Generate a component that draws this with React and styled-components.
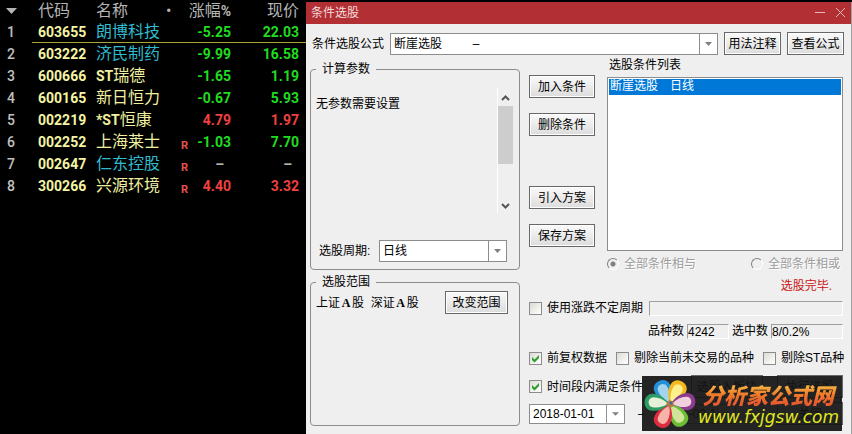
import React from 'react';
import styled, {createGlobalStyle, css} from 'styled-components';


const GlobalStyle = createGlobalStyle`
  * {
    box-sizing: border-box;
  }

  body {
    margin: 0;
    background: #000;
    color: #000;
    font: 12px/16px "Liberation Sans", "Noto Sans CJK SC", sans-serif;
  }

  button, input, select {
    font: inherit;
    color: inherit;
  }
`

const Screen = styled.div`
  display: grid;
  grid-template-columns: 306px minmax(0, 1fr);
  min-height: 100vh;
`

/* quotes */

const QuoteTable = styled.table`
  align-self: start;
  width: 100%;
  table-layout: fixed;
  border-collapse: separate;
  border-spacing: 0;
  font: 16px/20px Roboto, "Noto Sans CJK SC", sans-serif;

  th {
    height: 21px;
    padding: 0;
    font-weight: 400;
    text-align: left;
    color: #b4b4b4;
  }

  th:last-child, td:last-child {
    padding-right: 7px;
  }
`

const QuoteRow = styled.tr`
  td {
    height: 22px;
    padding: 0;
    border-bottom: 1px solid transparent;
  }

  td:not(:first-child) {
    border-color: ${({$active}) => $active ? '#a8a838' : 'transparent'};
  }
`

const tones = {
  up: '#f04040',
  down: '#20dc20',
  none: '#b4b4b4',
}

const IndexCell = styled.td`
  font-size: 14px;
  font-weight: 500;
  padding-left: 7px !important;
  color: #c0c0c0;
`

const CodeCell = styled.td`
  font-size: 14px;
  font-weight: 700;
  padding-left: 6px !important;
  color: #f4f4a4;
`

const NameCell = styled.td`
  white-space: nowrap;
  color: ${({$followed}) => $followed ? '#30bcd0' : '#f0f0a0'};

  b {
    font-size: 14px;
  }
`

const MarkCell = styled.td`
  font-size: 11px;
  line-height: 12px;
  font-weight: 700;
  text-align: right;
  vertical-align: bottom;
  color: #e85050;
`

const NumberCell = styled.td`
  font-size: 14px;
  font-weight: 700;
  text-align: right;
  color: ${({$tone}) => tones[$tone]};
`

const HeadCode = styled.th`
  padding-left: 6px !important;
`

const HeadNumber = styled.th`
  text-align: right !important;
  white-space: nowrap;

  b {
    font-size: 14px;
  }
`

const SortIcon = styled.svg`
  display: block;
  margin-left: 6px;
`

/* dialog */

const Dialog = styled.section`
  position: relative;
  display: flex;
  flex-direction: column;
  margin-top: 2px;
  background: #efefef;
  border-right: 1px solid #a0a0a0;
`

const TitleBar = styled.header`
  display: flex;
  align-items: center;
  justify-content: space-between;
  height: 22px;
  padding: 0 4px 0 5px;
  background: #b23034;
  color: #f4dcdc;

  h1 {
    margin: 0;
    font-size: 12px;
    font-weight: 400;
  }
`

const WindowButtons = styled.div`
  display: flex;
  gap: 6px;
`

const WindowButton = styled.button`
  width: 14px;
  height: 14px;
  padding: 0;
  border: 0;
  background: none;
  color: #e8b8b8;

  svg {
    display: block;
  }
`

const Body = styled.div`
  flex: 1;
  display: flex;
  flex-direction: column;
  gap: 2px;
  padding: 8px 7px 8px 4px;
`

const FormulaRow = styled.div`
  display: flex;
  align-items: center;
  gap: 6px;
  padding-left: 2px;
`

const PushButton = styled.button`
  height: 23px;
  width: ${({$width}) => $width || 66}px;
  padding: 0;
  border: 1px solid #686868;
  background: linear-gradient(#fafafa, #dcdcdc);
  box-shadow: inset 0 0 0 1px #fff;
  line-height: 16px;
  white-space: nowrap;
`

const SelectBox = styled.span`
  position: relative;
  display: block;
  ${({$width}) => $width ? css`width: ${$width}px;` : css`flex: 1;`}

  select {
    display: block;
    appearance: none;
    width: 100%;
    height: ${({$height}) => $height || 22}px;
    padding: 0 20px 0 3px;
    border: 1px solid #8c8c8c;
    border-radius: 0;
    background: #fff;
  }

  svg {
    position: absolute;
    top: 0;
    right: 0;
    height: 100%;
    pointer-events: none;
  }
`

const Columns = styled.div`
  flex: 1;
  display: grid;
  grid-template-columns: 210px minmax(0, 1fr);
  gap: 9px;
  padding-right: 1px;
`

const LeftColumn = styled.div`
  display: flex;
  flex-direction: column;
  gap: 4px;
  padding-top: 4px;
`

const Group = styled.fieldset`
  min-width: 0;
  margin: 0;
  padding: 0 5px 7px;
  border: 1px solid #8c8c8c;
  border-radius: 4px;
  ${({$fill}) => $fill && 'flex: 1;'}

  legend {
    padding: 0 6px;
    height: 16px;
  }
`

const ParamBox = styled.div`
  display: flex;
  justify-content: space-between;
  height: 125px;
  margin-top: 11px;

  p {
    margin: 8px 0 0;
  }
`

const ScrollTrack = styled.div`
  display: flex;
  flex-direction: column;
  width: 17px;
  border-left: 1px solid #fff;
  color: #555;

  svg {
    display: block;
    height: 18px;
  }
`

const ScrollThumb = styled.div`
  height: 58px;
  margin-bottom: auto;
  width: 15px;
  background: #cdcdcd;
`

const PeriodRow = styled.div`
  display: flex;
  align-items: center;
  justify-content: space-between;
  margin-top: 27px;
  padding: 0 7px 0 3px;
`

const ScopeRow = styled.div`
  display: flex;
  align-items: center;
  justify-content: space-between;
  padding-top: 1px;
  padding-right: 6px;
`

const LetterA = styled.span`
  display: inline-block;
  width: 12px;
  text-align: center;
  font-family: "Liberation Serif", serif;
  font-weight: 700;
`

const RightColumn = styled.div`
  display: flex;
  flex-direction: column;
`

const Conditions = styled.div`
  display: grid;
  grid-template-columns: 66px minmax(0, 1fr);
  gap: 12px;
`

const ButtonStack = styled.div`
  display: flex;
  flex-direction: column;
  gap: 15px;
  padding-top: 18px;

  button:nth-child(3) {
    margin-top: 35px;
  }
`

const ListTitle = styled.div`
  padding-left: 2px;
  height: 20px;
`

const ConditionList = styled.ul`
  height: 174px;
  margin: 0;
  padding: 1px;
  list-style: none;
  border: 1px solid #8c8c8c;
  background: #fff;

  li {
    height: 16px;
    line-height: 14px;
    padding-left: 1px;
    background: #0078d7;
    color: #fff;
    white-space: pre;
  }
`

const RadioRow = styled.div`
  display: flex;
  justify-content: space-between;
  padding: 5px 3px 0 0;
  color: #9c9c9c;
  text-shadow: 1px 1px 0 #fff;
`

const Option = styled.label`
  display: flex;
  align-items: center;
  gap: 5px;
  white-space: nowrap;
`

const Radio = styled.input.attrs({type: 'radio'})`
  appearance: none;
  width: 12px;
  height: 12px;
  margin: 0;
  border: 1px solid;
  border-color: #808080 #fff #fff #808080;
  border-radius: 50%;

  &:checked {
    background: radial-gradient(circle, #808080 2px, transparent 3px);
  }
`

const CheckBox = styled.input.attrs({type: 'checkbox'})`
  appearance: none;
  width: 13px;
  height: 13px;
  margin: 0;
  border: 1px solid #8c8c8c;
  background: linear-gradient(135deg, #dcdcd4, #fff);
`

const CheckMark = styled.span`
  position: relative;
  display: flex;

  svg {
    position: absolute;
    top: 0;
    left: 0;
    pointer-events: none;
  }
`

const Status = styled.p`
  margin: 6px 0 0;
  padding-right: 11px;
  text-align: right;
  color: #c81414;
`

const FieldRow = styled.div`
  display: flex;
  align-items: center;
  gap: 6px;
  margin-top: 6px;
`

const CountRow = styled.div`
  display: flex;
  align-items: center;
  justify-content: flex-end;
  gap: 3px;
  margin-top: 7px;
`

const Sunken = styled.output`
  width: ${({$width}) => $width ? $width + 'px' : 'auto'};
  ${({$width}) => !$width && 'flex: 1;'}
  height: 15px;
  line-height: 14px;
  border: 1px solid;
  border-color: #a0a0a0 #fff #fff #a0a0a0;
`

const CheckRow = styled.div`
  display: flex;
  align-items: center;
  gap: 9px;
  margin-top: 11px;
`

const ActionRow = styled.div`
  display: grid;
  grid-template-columns: minmax(0, 1fr) auto 66px;
  align-items: center;
  gap: 14px;
  margin-top: ${({$top}) => $top}px;
`

const DateRange = styled.div`
  grid-column: span 2;
  display: flex;
  align-items: center;
  gap: 13px;
`

const Banner = styled.aside`
  position: absolute;
  right: 9px;
  bottom: 3px;
  display: flex;
  align-items: center;
  width: 200px;
  height: 55px;
  background: rgba(20, 20, 20, 0.93);
`

const BannerText = styled.div`
  white-space: nowrap;

  strong {
    display: block;
    padding-left: 4px;
    font: italic 900 22px/26px "Noto Sans CJK SC", sans-serif;
    color: transparent;
    background: linear-gradient(#f8b040 20%, #f07828 55%, #e85c30 85%);
    background-clip: text;
  }

  a {
    display: block;
    font: italic 17px/20px "DejaVu Sans", sans-serif;
    text-decoration: none;
    color: #e0e820;
  }
`


const quotes = [
  {code: '603655', name: '朗博科技', followed: true, change: '-5.25', price: '22.03', tone: 'down'},
  {code: '603222', name: '济民制药', followed: true, change: '-9.99', price: '16.58', tone: 'down'},
  {code: '600666', prefix: 'ST', name: '瑞德', change: '-1.65', price: '1.19', tone: 'down'},
  {code: '600165', name: '新日恒力', change: '-0.67', price: '5.93', tone: 'down'},
  {code: '002219', prefix: '*ST', name: '恒康', change: '4.79', price: '1.97', tone: 'up'},
  {code: '002252', name: '上海莱士', mark: 'R', change: '-1.03', price: '7.70', tone: 'down'},
  {code: '002647', name: '仁东控股', followed: true, mark: 'R', change: '–\u00a0\u00a0', price: '–\u00a0\u00a0', tone: 'none'},
  {code: '300266', name: '兴源环境', mark: 'R', change: '4.40', price: '3.32', tone: 'up'},
]

const petals = [
  {angle: -26, outer: '#2490d8', inner: '#a4d4ec'},
  {angle: 28, outer: '#f4b820', inner: '#fcf08c'},
  {angle: 82, outer: '#8c3c90', inner: '#f0d0dc'},
  {angle: 146, outer: '#6cbc34', inner: '#d0e49c'},
  {angle: 206, outer: '#e02c40', inner: '#f4b4a8'},
  {angle: 276, outer: '#2c9c64', inner: '#e4f0d8'},
]


const Quotes = () => (
    <QuoteTable>
        <colgroup>
            <col width='32'/>
            <col width='64'/>
            <col width='70'/>
            <col width='22'/>
            <col width='43'/>
            <col/>
        </colgroup>
        <thead>
            <tr>
                <th>
                    <SortIcon width='11' height='6'>
                        <path d='M0 0h11L5.500 6z' fill='#b4b4b4'/>
                    </SortIcon>
                </th>
                <HeadCode>代码</HeadCode>
                <th>名称</th>
                <th>•</th>
                <HeadNumber>涨幅<b>%</b></HeadNumber>
                <HeadNumber>现价</HeadNumber>
            </tr>
        </thead>
        <tbody>
            {quotes.map((q, i) => (
                <QuoteRow key={q.code} $active={i === 0}>
                    <IndexCell>{i + 1}</IndexCell>
                    <CodeCell>{q.code}</CodeCell>
                    <NameCell $followed={q.followed}>
                        {q.prefix && <b>{q.prefix}</b>}{q.name}
                    </NameCell>
                    <MarkCell>{q.mark}</MarkCell>
                    <NumberCell $tone={q.tone}>{q.change}</NumberCell>
                    <NumberCell $tone={q.tone}>{q.price}</NumberCell>
                </QuoteRow>
            ))}
        </tbody>
    </QuoteTable>
)

const DropDown = ({id, label, width, height, children}) => (
    <SelectBox $width={width} $height={height}>
        <select id={id} aria-label={label}>
            <option>{children}</option>
        </select>
        <svg width='19' viewBox='0 0 19 22' preserveAspectRatio='none'>
            <path d='M.5 0v22' stroke='#8c8c8c'/>
            <path d='M6 9h7l-3.500 4z' fill='#808080'/>
        </svg>
    </SelectBox>
)

const Check = ({checked, children}) => (
    <Option>
        <CheckMark>
            <CheckBox defaultChecked={checked}/>
            {checked && (
                <svg width='13' height='13'>
                    <path d='M3 5v3l2.500 2.500L10 6V3L5.500 7.500z' fill='#2c9a2c'/>
                </svg>
            )}
        </CheckMark>
        {children}
    </Option>
)

const Flower = () => (
    <svg width='56' height='54' viewBox='-28 -27 56 54'>
        {petals.map(p => (
            <g key={p.angle} transform={`rotate(${p.angle})`}>
                <path d='M0 -1C-6 -6 -9 -12 -8.500 -18C-8 -28 8 -28 8.500 -18C9 -12 6 -6 0 -1z' fill={p.outer}/>
                <path d='M0 -2C-4 -7 -5.500 -12 -5 -17C-4.500 -23 4.500 -23 5 -17C5.500 -12 4 -7 0 -2z' fill={p.inner}/>
            </g>
        ))}
        <circle r='3.500' fill='#b87848'/>
        <circle cx='1' cy='-1' r='1.500' fill='#3c6c98'/>
    </svg>
)

const App = () => {
    return (
        <Screen>
            <GlobalStyle/>
            <Quotes/>
            <Dialog>
                <TitleBar>
                    <h1>条件选股</h1>
                    <WindowButtons>
                        <WindowButton aria-label='最小化'>
                            <svg width='14' height='14'><path d='M2 6.500h10' stroke='currentColor'/></svg>
                        </WindowButton>
                        <WindowButton aria-label='关闭窗口'>
                            <svg width='14' height='14'><path d='M3 2l9 9M12 2l-9 9' stroke='currentColor'/></svg>
                        </WindowButton>
                    </WindowButtons>
                </TitleBar>
                <Body>
                    <FormulaRow>
                        <label htmlFor='formula'>条件选股公式</label>
                        <DropDown id='formula'>{'断崖选股\u3000\u3000\u00a0\u00a0–'}</DropDown>
                        <PushButton $width={57}>用法注释</PushButton>
                        <PushButton $width={57}>查看公式</PushButton>
                    </FormulaRow>
                    <Columns>
                        <LeftColumn>
                            <Group>
                                <legend>计算参数</legend>
                                <ParamBox>
                                    <p>无参数需要设置</p>
                                    <ScrollTrack>
                                        <svg width='15' height='18'>
                                            <path d='M4 12l3.500-3.500L11 12' fill='none' stroke='currentColor' strokeWidth='2'/>
                                        </svg>
                                        <ScrollThumb/>
                                        <svg width='15' height='18'>
                                            <path d='M4 9l3.500 3.500L11 9' fill='none' stroke='currentColor' strokeWidth='2'/>
                                        </svg>
                                    </ScrollTrack>
                                </ParamBox>
                                <PeriodRow>
                                    <label htmlFor='period'>选股周期:</label>
                                    <DropDown id='period' width={128}>日线</DropDown>
                                </PeriodRow>
                            </Group>
                            <Group $fill>
                                <legend>选股范围</legend>
                                <ScopeRow>
                                    <span>上证<LetterA>A</LetterA>股&nbsp; 深证<LetterA>A</LetterA>股</span>
                                    <PushButton $width={63}>改变范围</PushButton>
                                </ScopeRow>
                            </Group>
                        </LeftColumn>
                        <RightColumn>
                            <Conditions>
                                <ButtonStack>
                                    <PushButton>加入条件</PushButton>
                                    <PushButton>删除条件</PushButton>
                                    <PushButton>引入方案</PushButton>
                                    <PushButton>保存方案</PushButton>
                                </ButtonStack>
                                <div>
                                    <ListTitle>选股条件列表</ListTitle>
                                    <ConditionList role='listbox' aria-label='选股条件列表'>
                                        <li role='option' aria-selected='true'>{'断崖选股\u3000日线'}</li>
                                    </ConditionList>
                                    <RadioRow>
                                        <Option><Radio name='join' defaultChecked disabled/>全部条件相与</Option>
                                        <Option><Radio name='join' disabled/>全部条件相或</Option>
                                    </RadioRow>
                                </div>
                            </Conditions>
                            <Status>选股完毕.</Status>
                            <FieldRow>
                                <Check>使用涨跌不定周期</Check>
                                <Sunken/>
                            </FieldRow>
                            <CountRow>
                                <label htmlFor='total'>品种数</label>
                                <Sunken id='total' $width={42}>4242</Sunken>
                                <label htmlFor='picked'>选中数</label>
                                <Sunken id='picked' $width={72}>8/0.2%</Sunken>
                            </CountRow>
                            <CheckRow>
                                <Check checked>前复权数据</Check>
                                <Check>剔除当前未交易的品种</Check>
                                <Check>剔除ST品种</Check>
                            </CheckRow>
                            <ActionRow $top={9}>
                                <Check checked>时间段内满足条件</Check>
                                <PushButton $width={72}>选股入板块</PushButton>
                                <PushButton>执行选股</PushButton>
                            </ActionRow>
                            <ActionRow $top={4}>
                                <DateRange>
                                    <DropDown label='开始日期' width={96} height={20}>2018-01-01</DropDown>
                                    –
                                    <DropDown label='结束日期' width={78} height={20}>2021-09-14</DropDown>
                                </DateRange>
                                <PushButton>关闭</PushButton>
                            </ActionRow>
                        </RightColumn>
                    </Columns>
                </Body>
                <Banner>
                    <Flower/>
                    <BannerText>
                        <strong>分析家公式网</strong>
                        <a href='#home'>www.fxjgsw.com</a>
                    </BannerText>
                </Banner>
            </Dialog>
        </Screen>
    );
};

export default App;
